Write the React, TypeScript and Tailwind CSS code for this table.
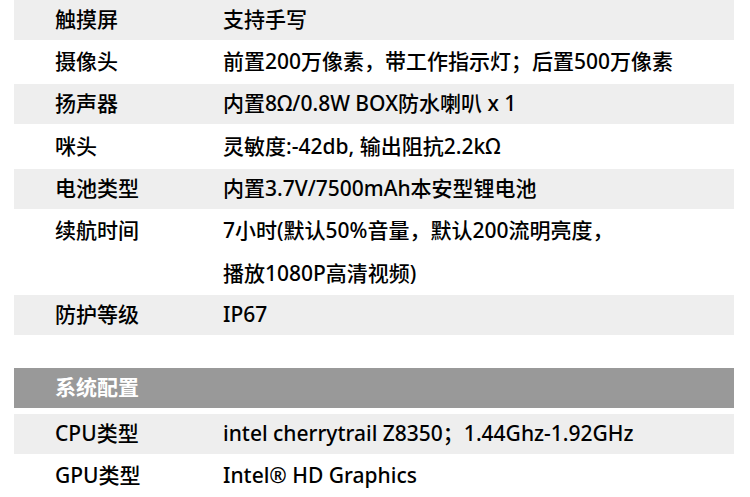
import React from "react";

const font = {
  fontFamily: '"Noto Sans", "Noto Sans CJK SC", sans-serif',
};

type Row = { label: string; value: string[]; gray: boolean; h: string };

const rows: Row[] = [
  { label: "触摸屏", value: ["支持手写"], gray: true, h: "h-[40px]" },
  {
    label: "摄像头",
    value: ["前置200万像素，带工作指示灯；后置500万像素"],
    gray: false,
    h: "h-[44px]",
  },
  { label: "扬声器", value: ["内置8Ω/0.8W BOX防水喇叭 x 1"], gray: true, h: "h-[40px]" },
  { label: "咪头", value: ["灵敏度:-42db, 输出阻抗2.2kΩ"], gray: false, h: "h-[45px]" },
  { label: "电池类型", value: ["内置3.7V/7500mAh本安型锂电池"], gray: true, h: "h-[40px]" },
  {
    label: "续航时间",
    value: ["7小时(默认50%音量，默认200流明亮度，", "播放1080P高清视频)"],
    gray: false,
    h: "h-[86px]",
  },
  { label: "防护等级", value: ["IP67"], gray: true, h: "h-[40px]" },
];

const sys: Row[] = [
  {
    label: "CPU类型",
    value: ["intel cherrytrail Z8350；1.44Ghz-1.92GHz"],
    gray: true,
    h: "h-[40px]",
  },
  { label: "GPU类型", value: ["Intel® HD Graphics"], gray: false, h: "h-[44px]" },
];

function SpecRow({ r }: { r: Row }) {
  if (r.value.length > 1) {
    return (
      <div className={`flex ${r.h} bg-white`}>
        <div className="w-[209px] shrink-0 pl-[41px]">
          <div className="h-[43px] flex items-center">{r.label}</div>
        </div>
        <div className="flex flex-col">
          {r.value.map((v, j) => (
            <div key={j} className="h-[43px] flex items-center">
              {v}
            </div>
          ))}
        </div>
      </div>
    );
  }
  return (
    <div className={`flex items-center ${r.h} ${r.gray ? "bg-[#eeeeee]" : "bg-white"}`}>
      <div className="w-[209px] shrink-0 pl-[41px]">{r.label}</div>
      <div className="whitespace-nowrap">{r.value[0]}</div>
    </div>
  );
}

export default function App() {
  return (
    <div
      className="w-[750px] h-[497px] bg-white overflow-hidden text-[21px] font-medium text-black"
      style={font}
    >
      <div className="mx-[14px] w-[720px]">
        {rows.map((r, i) => (
          <SpecRow key={i} r={r} />
        ))}
        <div className="h-[33px]" />
        <div className="h-[40px] bg-[#999999] flex items-center pl-[41px] text-white font-bold">
          系统配置
        </div>
        <div className="h-[6px]" />
        {sys.map((r, i) => (
          <SpecRow key={i} r={r} />
        ))}
      </div>
    </div>
  );
}
